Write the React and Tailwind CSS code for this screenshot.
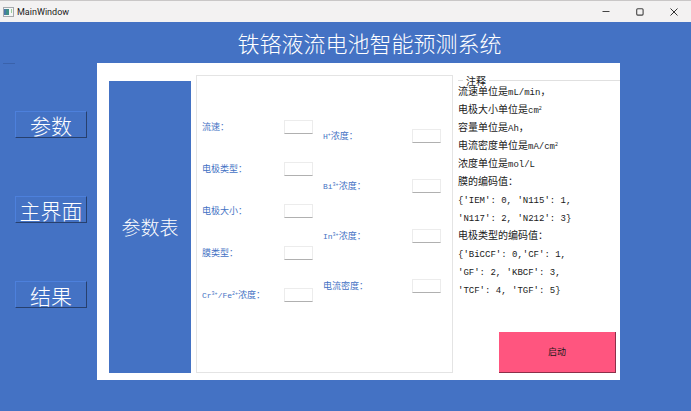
const leftFields = [
  { id: "flow", label: <>流速：</> },
  { id: "electrode-type", label: <>电极类型：</> },
  { id: "electrode-size", label: <>电极大小：</> },
  { id: "membrane", label: <>膜类型：</> },
  { id: "crfe", label: <><Latin>Cr<Sup>3+</Sup>/Fe<Sup>2+</Sup></Latin>浓度：</> },
];

const rightFields = [
  { id: "h", label: <><Latin>H<Sup>+</Sup></Latin>浓度：</> },
  { id: "bi", label: <><Latin>Bi<Sup>3+</Sup></Latin>浓度：</> },
  { id: "in", label: <><Latin>In<Sup>3+</Sup></Latin>浓度：</> },
  { id: "current", label: <>电流密度：</> },
];

function Latin({ children }) {
  return <span className="font-['Liberation_Mono',monospace] text-[8px]">{children}</span>;
}

function Sup({ children }) {
  return <sup className="top-0 align-[3px] text-[5px] leading-none">{children}</sup>;
}

function Code({ children }) {
  return <span className="font-['Liberation_Mono',monospace] text-[9px] whitespace-pre">{children}</span>;
}

function NavButton({ children }) {
  return (
    <button
      type="button"
      className="h-[27px] w-[72px] border border-t-[#4d80dc] border-l-[#4d80dc] border-r-[#27406e] border-b-[#27406e] text-[21px] leading-[24px] font-light whitespace-nowrap text-white"
    >
      {children}
    </button>
  );
}

function Field({ id, label }) {
  return (
    <div className="flex h-[14px] items-center justify-between">
      <label htmlFor={id} className="text-[9px] leading-[14px] whitespace-nowrap text-[#4472c4]">
        {label}
      </label>
      <input
        id={id}
        type="text"
        className="h-[14px] w-[29px] border border-[#ececec] border-b-[#b0b0b0] bg-white px-1 text-[9px] outline-none"
      />
    </div>
  );
}

function TitleBar() {
  return (
    <header className="flex h-[22px] items-center border-t border-[#c9c7c7] bg-[#f3f2f2] pl-[3px]">
      <svg width="11" height="10" viewBox="0 0 11 10" aria-hidden="true">
        <rect x="0.5" y="0.5" width="10" height="9" fill="#f4f6f6" stroke="#a5a9ad" />
        <rect x="1" y="2" width="5" height="6" fill="#3f8f86" />
        <rect x="1" y="2" width="2" height="6" fill="#4a78a8" />
        <rect x="8" y="2" width="1" height="4" fill="#9ccb9c" />
      </svg>
      <span className="ml-[3px] flex-1 font-['Roboto',sans-serif] text-[9px] leading-[20px] text-[#1c1c1c]">
        MainWindow
      </span>
      <button type="button" aria-label="Minimize" className="flex h-full w-[34px] items-center justify-center">
        <svg width="8" height="8" viewBox="0 0 8 8" stroke="#444" fill="none"><path d="M0.5 3.5H7.5" /></svg>
      </button>
      <button type="button" aria-label="Maximize" className="flex h-full w-[34px] items-center justify-center">
        <svg width="8" height="8" viewBox="0 0 8 8" stroke="#444" fill="none"><rect x="0.7" y="0.7" width="6.4" height="6.4" rx="1" strokeWidth="1.1" /></svg>
      </button>
      <button type="button" aria-label="Close" className="flex h-full w-[34px] items-center justify-center">
        <svg width="8" height="8" viewBox="0 0 8 8" stroke="#333" fill="none"><path d="M0.5 0.5L7.5 7.5M7.5 0.5L0.5 7.5" /></svg>
      </button>
    </header>
  );
}

export default function App() {
  return (
    <div className="flex min-h-screen flex-col bg-[#4472c4] font-['Noto_Sans_CJK_SC',sans-serif]">
      <TitleBar />
      <h1 className="h-[41px] pl-12 text-center text-[22px] leading-[40px] font-light text-white">
        铁铬液流电池智能预测系统
      </h1>
      <div className="flex flex-1 pr-[71px] pb-[31px]">
        <nav className="w-[97px] shrink-0">
          <hr className="ml-[3px] w-3 border-[#3a62ab]" />
          <div className="flex flex-col gap-[58px] pt-[47px] pl-[15px]">
            <NavButton>参数</NavButton>
            <NavButton>主界面</NavButton>
            <NavButton>结果</NavButton>
          </div>
        </nav>
        <main className="flex min-w-0 flex-1 bg-white pb-[7px] pl-3">
          <div className="mt-[18px] flex w-[82px] shrink-0 items-center justify-center bg-[#4472c4] text-[19px] font-light text-white">
            参数表
          </div>
          <form className="mt-3 ml-[5px] flex min-w-0 flex-1 items-center gap-[10px] border border-[#e4e4e4] pr-[11px] pb-[26px] pl-[5px]">
            <div className="flex flex-[111] flex-col gap-[28px]">
              {leftFields.map((f) => <Field key={f.id} {...f} />)}
            </div>
            <div className="flex flex-[118] flex-col gap-9">
              {rightFields.map((f) => <Field key={f.id} {...f} />)}
            </div>
          </form>
          <section className="mt-4 ml-[5px] flex w-[162px] shrink-0 flex-col justify-between">
            <fieldset className="min-w-0 border-t border-[#e0e0e0]">
              <legend className="ml-[5px] px-[3px] text-[10px] leading-[3px] text-[#222]">注释</legend>
              <div className="text-[10px] leading-[18px] whitespace-nowrap text-[#1a1a1a]">
                <p className="h-[18px]">流速单位是<Code>mL/min</Code>，</p>
                <p className="h-[18px]">电极大小单位是<Code>cm<Sup>2</Sup></Code></p>
                <p className="h-[18px]">容量单位是<Code>Ah</Code>，</p>
                <p className="h-[18px]">电流密度单位是<Code>mA/cm<Sup>2</Sup></Code></p>
                <p className="h-[18px]">浓度单位是<Code>mol/L</Code></p>
                <p className="h-[18px]">膜的编码值：</p>
                <p className="h-[18px]"><Code>{"{'IEM': 0, 'N115': 1,"}</Code></p>
                <p className="h-[18px]"><Code>{"'N117': 2, 'N212': 3}"}</Code></p>
                <p className="h-[18px]">电极类型的编码值：</p>
                <p className="h-[18px]"><Code>{"{'BiCCF': 0,'CF': 1,"}</Code></p>
                <p className="h-[18px]"><Code>{"'GF': 2, 'KBCF': 3,"}</Code></p>
                <p className="h-[18px]"><Code>{"'TCF': 4, 'TGF': 5}"}</Code></p>
              </div>
            </fieldset>
            <button
              type="button"
              className="mr-1 h-[41px] w-[117px] self-end border-r border-b border-[#8c3049] bg-[#ff557f] text-[9px] text-[#1a1a1a]"
            >
              启动
            </button>
          </section>
        </main>
      </div>
    </div>
  );
}
